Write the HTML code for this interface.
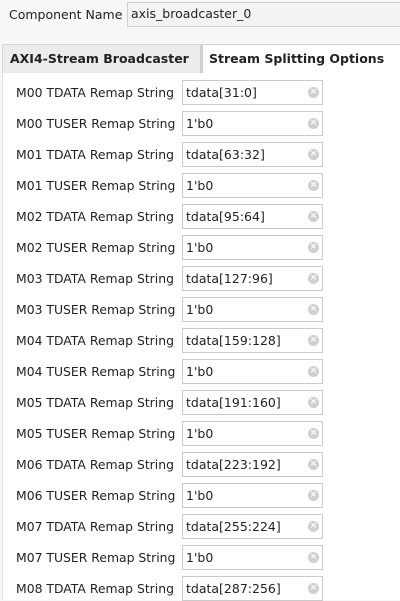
<!DOCTYPE html>
<html><head><style>
*{margin:0;padding:0;box-sizing:border-box}
body{width:400px;height:600px;overflow:hidden;background:#f7f7f7;font-family:"DejaVu Sans","Liberation Sans",sans-serif;font-size:12px;color:#222;position:relative}
.a{position:absolute;white-space:nowrap}
.cn{left:127px;top:2px;width:280px;height:25px;border:1px solid #cfcfcf;background:#f3f3f3;padding:3px 0 0 3px;font-size:12.5px}
.tabs{left:2px;top:44px;width:398px;height:30px;background:#fff;border-left:1px solid #d4d4d4;border-top:1px solid #d4d4d4}
.t1{left:3px;top:45px;width:197px;height:28px;background:#ececec;font-weight:bold;padding:6px 0 0 7px;font-size:12.5px}
.sep{left:200px;top:45px;width:3px;height:28px;background:#d0d0d0}
.t2{left:209px;top:51px;font-weight:bold;font-size:12.5px}
.content{left:2px;top:74px;width:398px;height:526px;background:#fff;border-left:1px solid #e0e0e0}
.l{left:16px;font-size:12.4px}
.in{left:182px;width:141px;height:25px;border:1px solid #cbcbcb;background:#fff;padding:4px 0 0 3px;font-size:12.5px}
.x{position:absolute;right:3px;top:6px;width:11px;height:11px;border-radius:50%;background:#cfcfcf;color:#fff;font-size:9px;line-height:11px;text-align:center;font-weight:bold}
</style></head><body>
<div class="a" style="left:9px;top:7px;font-size:12.5px">Component Name</div>
<div class="a cn">axis_broadcaster_0</div>
<div class="a tabs"></div>
<div class="a content"></div>
<div class="a t1">AXI4-Stream Broadcaster</div>
<div class="a sep"></div>
<div class="a t2">Stream Splitting Options</div>
<div id="rows"></div>
<script>
var v=["tdata[31:0]","1'b0","tdata[63:32]","1'b0","tdata[95:64]","1'b0","tdata[127:96]","1'b0","tdata[159:128]","1'b0","tdata[191:160]","1'b0","tdata[223:192]","1'b0","tdata[255:224]","1'b0","tdata[287:256]"];
var h="";
for(var i=0;i<v.length;i++){var n="M0"+Math.floor(i/2);var y=80+i*31;
h+='<div class="a l" style="top:'+(y+5)+'px">'+n+(i%2?' TUSER':' TDATA')+' Remap String</div>';
h+='<div class="a in" style="top:'+y+'px">'+v[i]+'<span class="x">×</span></div>';}
document.getElementById("rows").innerHTML=h;
</script>
</body></html>
